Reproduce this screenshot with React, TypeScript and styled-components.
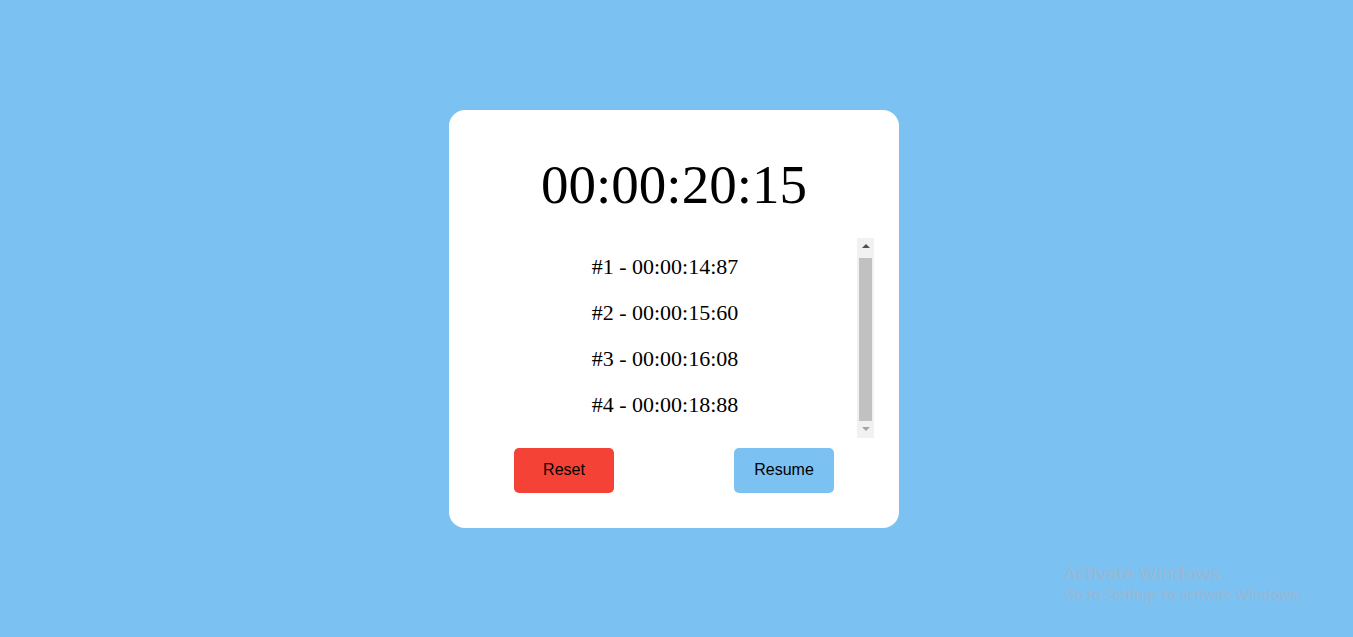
import React from "react";
import styled, { createGlobalStyle } from "styled-components";

const GlobalStyle = createGlobalStyle`
  html, body {
    margin: 0;
    padding: 0;
    background: #7bc1f2;
  }
  body {
    font-family: "Liberation Serif", "Times New Roman", serif;
  }
`;

const Page = styled.div`
  min-height: 100vh;
  display: flex;
  align-items: center;
  justify-content: center;
  padding-right: 5px;
  box-sizing: border-box;
  background: #7bc1f2;
  position: relative;
`;

const Card = styled.div`
  width: 450px;
  box-sizing: border-box;
  background: #ffffff;
  border-radius: 16px;
  padding: 24px 24px 35px;
  display: flex;
  flex-direction: column;
`;

const Timer = styled.div`
  font-family: "Liberation Serif", "Times New Roman", serif;
  font-size: 55px;
  line-height: 62px;
  padding: 20px 0 22px;
  text-align: center;
  color: #000;
`;

const ScrollArea = styled.div`
  height: 200px;
  display: flex;
`;

const Viewport = styled.div`
  flex: 1;
  overflow: hidden;
`;

const Laps = styled.ul`
  list-style: none;
  margin: 0;
  padding: 6px 0 14px;
`;

const Lap = styled.li`
  height: 46px;
  display: flex;
  align-items: center;
  justify-content: center;
  font-family: "Liberation Serif", "Times New Roman", serif;
  font-size: 22px;
  line-height: 25px;
  color: #000;
`;

const Scrollbar = styled.div`
  width: 17px;
  margin-right: 1px;
  display: flex;
  flex-direction: column;
  background: #f1f1f1;
`;

const ArrowButton = styled.div`
  height: 17px;
  display: flex;
  align-items: center;
  justify-content: center;
`;

const Track = styled.div`
  flex: 1;
  display: flex;
  flex-direction: column;
  justify-content: flex-end;
  padding: 0 2px;
`;

const Thumb = styled.div`
  height: 163px;
  background: #c1c1c1;
`;

const Controls = styled.div`
  display: flex;
  justify-content: center;
  gap: 120px;
  margin-top: 10px;
`;

const Button = styled.button<{ $variant: "reset" | "resume" }>`
  width: 100px;
  height: 45px;
  border: none;
  border-radius: 5px;
  background: ${(p) => (p.$variant === "reset" ? "#f44336" : "#7bc1f2")};
  color: #000;
  font-family: "Liberation Sans", Arial, sans-serif;
  font-size: 16px;
  cursor: pointer;
  padding: 0;
`;

const Watermark = styled.div`
  position: absolute;
  left: 1064px;
  top: 561px;
  font-family: "Open Sans", "Noto Sans", sans-serif;
  color: #9cb7d0;
  pointer-events: none;
`;

const WatermarkTitle = styled.div`
  font-size: 19px;
  line-height: 24px;
`;

const WatermarkSub = styled.div`
  font-size: 14.5px;
  line-height: 20px;
`;

const laps = ["00:00:14:87", "00:00:15:60", "00:00:16:08", "00:00:18:88"];

const Arrow = ({ up, color }: { up: boolean; color: string }) => (
  <svg width="8" height="4" viewBox="0 0 8 4">
    <polygon points={up ? "0,4 8,4 4,0" : "0,0 8,0 4,4"} fill={color} />
  </svg>
);

export default function App() {
  return (
    <>
      <GlobalStyle />
      <Page>
        <Card>
          <Timer>00:00:20:15</Timer>
          <ScrollArea>
            <Viewport>
              <Laps>
                {laps.map((t, i) => (
                  <Lap key={i}>
                    #{i + 1} - {t}
                  </Lap>
                ))}
              </Laps>
            </Viewport>
            <Scrollbar>
              <ArrowButton>
                <Arrow up color="#505050" />
              </ArrowButton>
              <Track>
                <Thumb />
              </Track>
              <ArrowButton>
                <Arrow up={false} color="#a3a3a3" />
              </ArrowButton>
            </Scrollbar>
          </ScrollArea>
          <Controls>
            <Button $variant="reset">Reset</Button>
            <Button $variant="resume">Resume</Button>
          </Controls>
        </Card>
        <Watermark>
          <WatermarkTitle>Activate Windows</WatermarkTitle>
          <WatermarkSub>Go to Settings to activate Windows.</WatermarkSub>
        </Watermark>
      </Page>
    </>
  );
}
